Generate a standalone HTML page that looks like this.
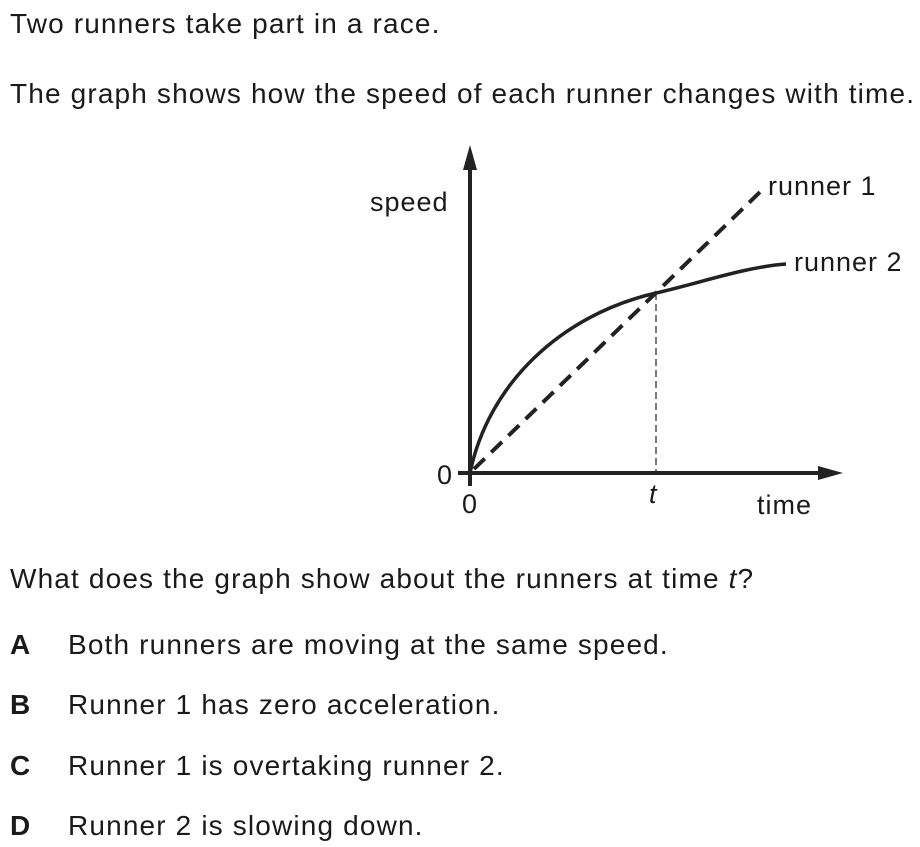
<!DOCTYPE html>
<html><head><style>
body{margin:0;width:920px;height:847px;background:#fff;font-family:"Liberation Sans",Arial,sans-serif;color:#1a1a1a;position:relative;overflow:hidden}
.t{position:absolute;font-size:28px;letter-spacing:1.15px;white-space:nowrap;line-height:1}
b{position:absolute;left:10px;font-weight:bold}
</style></head><body>
<div class="t" style="left:10px;top:10px">Two runners take part in a race.</div>
<div class="t" style="left:10px;top:80px">The graph shows how the speed of each runner changes with time.</div>
<svg width="920" height="847" style="position:absolute;left:0;top:0">
<g stroke="#222" fill="none">
<line x1="470" y1="165" x2="470" y2="486" stroke-width="4"/>
<line x1="458" y1="473" x2="822" y2="473" stroke-width="4"/>
<line x1="656" y1="293" x2="656" y2="473" stroke-width="1.2" stroke-dasharray="7,4"/>
<line x1="474" y1="469" x2="760" y2="192" stroke-width="4" stroke-dasharray="15,8.94"/>
<path d="M470,473 C488,385 560,315 656,293 C700,283 745,267 786,264" stroke-width="3.5"/>
</g>
<polygon points="470,145 463,170 477,170" fill="#222"/>
<polygon points="843,473 818,466 818,480" fill="#222"/>
<g font-family="Liberation Sans,Arial,sans-serif" font-size="27" letter-spacing="1" fill="#1a1a1a">
<text x="370" y="211">speed</text>
<text x="768" y="195">runner 1</text>
<text x="794" y="271">runner 2</text>
<text x="437" y="484">0</text>
<text x="462" y="513">0</text>
<text x="649" y="503" font-style="italic">t</text>
<text x="757" y="514">time</text>
</g>
</svg>
<div class="t" style="left:10px;top:565px">What does the graph show about the runners at time <i>t</i>?</div>
<div class="t" style="top:631px"><b>A</b><span style="position:absolute;left:68px">Both runners are moving at the same speed.</span></div>
<div class="t" style="top:691px"><b>B</b><span style="position:absolute;left:68px">Runner 1 has zero acceleration.</span></div>
<div class="t" style="top:752px"><b>C</b><span style="position:absolute;left:68px">Runner 1 is overtaking runner 2.</span></div>
<div class="t" style="top:812px"><b>D</b><span style="position:absolute;left:68px">Runner 2 is slowing down.</span></div>
</body></html>
